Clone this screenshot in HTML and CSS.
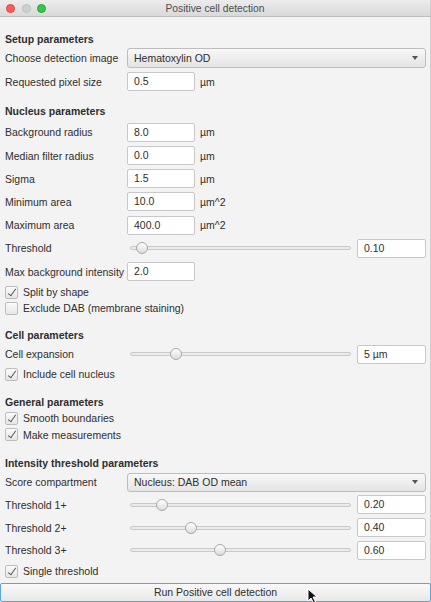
FILE: index.html
```html
<!DOCTYPE html>
<html>
<head>
<meta charset="utf-8">
<link rel="stylesheet" href="styles.css">
</head>
<body>
<div class="window">
  <div class="titlebar">
    <div class="lights"><span class="light red"></span><span class="light gray"></span><span class="light green"></span></div>
    <div class="title">Positive cell detection</div>
  </div>
  <div class="content">
    <div class="header h-first">Setup parameters</div>
    <div class="row r22"><div class="label">Choose detection image</div><div class="combo"><span>Hematoxylin OD</span><span class="arrow"></span></div></div>
    <div class="row r25"><div class="label">Requested pixel size</div><div class="field">0.5</div><div class="unit">µm</div></div>

    <div class="header h-nucleus">Nucleus parameters</div>
    <div class="row r24"><div class="label">Background radius</div><div class="field">8.0</div><div class="unit">µm</div></div>
    <div class="row r23"><div class="label">Median filter radius</div><div class="field">0.0</div><div class="unit">µm</div></div>
    <div class="row r23"><div class="label">Sigma</div><div class="field">1.5</div><div class="unit">µm</div></div>
    <div class="row r23"><div class="label">Minimum area</div><div class="field">10.0</div><div class="unit">µm^2</div></div>
    <div class="row r24"><div class="label">Maximum area</div><div class="field">400.0</div><div class="unit">µm^2</div></div>
    <div class="row r22"><div class="label">Threshold</div><div class="slider"><div class="track"></div><div class="thumb" style="left:9px"></div></div><div class="field vfield">0.10</div></div>
    <div class="row r25"><div class="label">Max background intensity</div><div class="field">2.0</div></div>
    <div class="row r16"><span class="check on"></span><span class="ctext">Split by shape</span></div>
    <div class="row r16"><span class="check"></span><span class="ctext">Exclude DAB (membrane staining)</span></div>

    <div class="header h-sec">Cell parameters</div>
    <div class="row r22"><div class="label">Cell expansion</div><div class="slider"><div class="track"></div><div class="thumb" style="left:43px"></div></div><div class="field vfield">5 µm</div></div>
    <div class="row r18"><span class="check on"></span><span class="ctext">Include cell nucleus</span></div>

    <div class="header h-sec">General parameters</div>
    <div class="row r16"><span class="check on"></span><span class="ctext">Smooth boundaries</span></div>
    <div class="row r17"><span class="check on"></span><span class="ctext">Make measurements</span></div>

    <div class="header h-int">Intensity threshold parameters</div>
    <div class="row r22"><div class="label">Score compartment</div><div class="combo cmb2"><span>Nucleus: DAB OD mean</span><span class="arrow"></span></div></div>
    <div class="row r23"><div class="label">Threshold 1+</div><div class="slider"><div class="track"></div><div class="thumb" style="left:29px"></div></div><div class="field vfield">0.20</div></div>
    <div class="row r23"><div class="label">Threshold 2+</div><div class="slider"><div class="track"></div><div class="thumb" style="left:58px"></div></div><div class="field vfield">0.40</div></div>
    <div class="row r22"><div class="label">Threshold 3+</div><div class="slider"><div class="track"></div><div class="thumb" style="left:87px"></div></div><div class="field vfield">0.60</div></div>
    <div class="row r20"><span class="check on"></span><span class="ctext">Single threshold</span></div>
  </div>
  <div class="button">Run Positive cell detection
    <svg class="cursor" width="12" height="16" viewBox="0 0 12 16"><path d="M1 1 L1 13 L4 10 L6.5 15 L8.5 14 L6 9 L10 9 Z" fill="#111" stroke="#fff" stroke-width="1"/></svg>
  </div>
</div>
</body>
</html>
```

FILE: styles.css
```css
html, body {
  margin: 0;
  padding: 0;
}
body {
  width: 431px;
  height: 602px;
  overflow: hidden;
  background: #f3f3f3;
  font-family: "Liberation Sans", Arial, sans-serif;
  font-size: 10.5px;
  color: #2e2e2e;
}
.window {
  position: relative;
  width: 431px;
  height: 602px;
  box-sizing: border-box;
  border-right: 1px solid #cfcfcf;
  display: flex;
  flex-direction: column;
}
.titlebar {
  height: 16px;
  border-bottom: 1px solid #bdbdbd;
  background: linear-gradient(#ececec, #d9d9d9);
  position: relative;
  display: flex;
  align-items: center;
  justify-content: center;
  flex-shrink: 0;
}
.lights {
  position: absolute;
  left: 6px;
  top: 4px;
  display: flex;
  gap: 6.5px;
}
.light {
  width: 9px;
  height: 9px;
  border-radius: 50%;
  box-sizing: border-box;
}
.red { background: #fc5b57; border: 0.5px solid #e2463f; }
.gray { background: #d0d0d0; border: 0.5px solid #c0c0c0; }
.green { background: #34c84a; border: 0.5px solid #25a93a; }
.title {
  color: #4d4d4d;
  font-size: 10.3px;
}
.content {
  padding: 14px 4px 0 5px;
  display: flex;
  flex-direction: column;
  flex: 1;
}
.header {
  height: 16px;
  line-height: 16px;
  font-weight: bold;
}
.h-nucleus { margin-top: 9px; height: 17px; }
.h-sec { margin-top: 11px; }
.h-int { margin-top: 12px; }
.row {
  display: flex;
  align-items: center;
}
.r16 { height: 16px; }
.r17 { height: 17px; }
.r18 { height: 18px; }
.r20 { height: 20px; }
.r22 { height: 22px; }
.r23 { height: 23px; }
.r24 { height: 24px; }
.r25 { height: 25px; }
.label {
  width: 122px;
  flex-shrink: 0;
}
.field {
  width: 68px;
  height: 19px;
  box-sizing: border-box;
  background: #fff;
  border: 1px solid #c8c8c8;
  border-radius: 2px;
  padding-left: 6px;
  line-height: 17px;
}
.unit {
  margin-left: 5px;
}
.vfield {
  width: 69px;
  margin-left: 3px;
}
.combo {
  flex: 1;
  height: 20px;
  box-sizing: border-box;
  border: 1px solid #bdbdbd;
  border-radius: 3px;
  background: linear-gradient(#f8f8f8, #e4e4e4);
  display: flex;
  align-items: center;
  justify-content: space-between;
  padding: 0 7px 0 6px;
}
.cmb2 { height: 19px; }
.arrow {
  width: 0;
  height: 0;
  border-left: 3.5px solid transparent;
  border-right: 3.5px solid transparent;
  border-top: 4px solid #555;
}
.slider {
  flex: 1;
  height: 14px;
  position: relative;
}
.track {
  position: absolute;
  left: 3px;
  right: 3px;
  top: 5px;
  height: 4px;
  box-sizing: border-box;
  border: 1px solid #c9c9c9;
  border-radius: 2px;
  background: #ebebeb;
}
.thumb {
  position: absolute;
  top: 1px;
  width: 12px;
  height: 12px;
  box-sizing: border-box;
  border: 1px solid #a9a9a9;
  border-radius: 50%;
  background: linear-gradient(#ffffff, #dcdcdc);
}
.check {
  width: 13px;
  height: 13px;
  box-sizing: border-box;
  border: 1px solid #bdbdbd;
  border-radius: 2px;
  background: linear-gradient(#fbfbfb, #e6e6e6);
  position: relative;
  flex-shrink: 0;
}
.check.on::after {
  content: "";
  position: absolute;
  left: 4px;
  top: 0px;
  width: 3px;
  height: 8px;
  border-right: 1.3px solid #555;
  border-bottom: 1.3px solid #555;
  transform: rotate(35deg);
}
.ctext {
  margin-left: 5px;
}
.button {
  position: relative;
  margin-top: 2px;
  height: 19px;
  box-sizing: border-box;
  border: 1px solid #5aa5d9;
  border-radius: 2px;
  background: linear-gradient(#f9f9f9, #e8e8e8);
  text-align: center;
  line-height: 17px;
  flex-shrink: 0;
  margin-right: -1px;
}
.cursor {
  position: absolute;
  left: 306px;
  top: 4px;
}
```
